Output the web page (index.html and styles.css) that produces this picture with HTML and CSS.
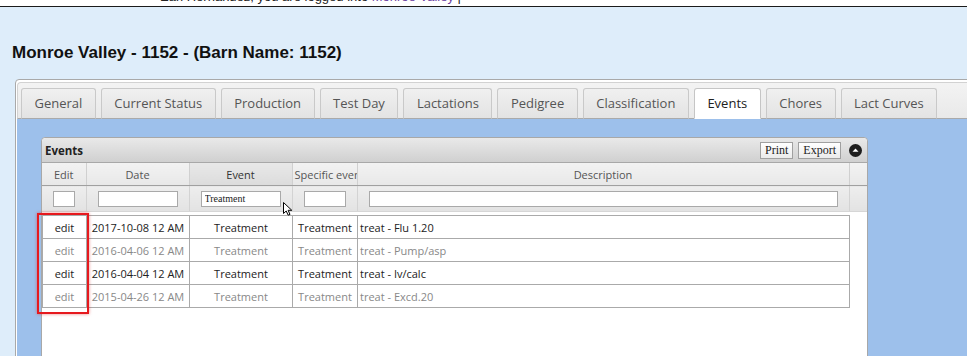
FILE: index.html
```html
<!DOCTYPE html>
<html>
<head>
<meta charset="utf-8">
<link rel="stylesheet" href="styles.css">
</head>
<body>
<div class="topbar">
  <div class="welcome">Earl Hernandez, you are logged into <span class="farm">Monroe Valley</span> |</div>
</div>
<h1 class="title">Monroe Valley - 1152 - (Barn Name: 1152)</h1>
<div class="tabs">
  <ul class="tabnav">
    <li class="tab">General</li>
    <li class="tab">Current Status</li>
    <li class="tab">Production</li>
    <li class="tab">Test Day</li>
    <li class="tab">Lactations</li>
    <li class="tab">Pedigree</li>
    <li class="tab">Classification</li>
    <li class="tab active">Events</li>
    <li class="tab">Chores</li>
    <li class="tab">Lact Curves</li>
  </ul>
  <div class="panel">
    <div class="grid">
      <div class="caption">
        <span class="caption-title">Events</span>
        <div class="caption-tools">
          <button class="btn">Print</button>
          <button class="btn">Export</button>
          <svg class="collapse" width="13" height="13" viewBox="0 0 13 13"><circle cx="6.5" cy="6.5" r="6.5" fill="#1d1d1d"/><path d="M3.5 7.8 L6.5 4.6 L9.5 7.8 Z" fill="#fff"/></svg>
        </div>
      </div>
      <div class="hdiv">
        <table class="htable">
          <colgroup><col class="c-edit"><col class="c-date"><col class="c-event"><col class="c-spec"><col class="c-desc"><col class="c-pad"></colgroup>
          <tr class="labels">
            <th>Edit</th><th>Date</th><th class="sorted">Event</th><th class="left">Specific event</th><th>Description</th><th class="pad"></th>
          </tr>
          <tr class="filters">
            <th><input class="fin" type="text"></th>
            <th><input class="fin" type="text"></th>
            <th><input class="fin" type="text" value="Treatment"></th>
            <th><input class="fin" type="text"></th>
            <th><input class="fin" type="text"></th>
            <th class="pad"></th>
          </tr>
        </table>
      </div>
      <div class="bdiv">
        <table class="btable">
          <colgroup><col class="c-edit"><col class="c-date"><col class="c-event"><col class="c-spec"><col class="c-desc"></colgroup>
          <tr class="row dark"><td>edit</td><td>2017-10-08 12 AM</td><td>Treatment</td><td>Treatment</td><td class="desc">treat - Flu 1.20</td></tr>
          <tr class="row light"><td>edit</td><td>2016-04-06 12 AM</td><td>Treatment</td><td>Treatment</td><td class="desc">treat - Pump/asp</td></tr>
          <tr class="row dark"><td>edit</td><td>2016-04-04 12 AM</td><td>Treatment</td><td>Treatment</td><td class="desc">treat - Iv/calc</td></tr>
          <tr class="row light"><td>edit</td><td>2015-04-26 12 AM</td><td>Treatment</td><td>Treatment</td><td class="desc">treat - Excd.20</td></tr>
        </table>
      </div>
    </div>
  </div>
</div>
<div class="highlight"></div>
<svg class="cursor" width="12" height="14" viewBox="0 0 12 14"><path d="M0.5 0.5 L0.5 11.5 L3.2 9 L5.2 13.2 L7 12.4 L5.1 8.3 L8.8 8.3 Z" fill="#fff" stroke="#000" stroke-width="1"/></svg>
</body>
</html>
```
FILE: styles.css
```css
html, body {
  height: 100%;
  overflow: hidden;
}
body {
  margin: 0;
  background: #deedfa;
  font-family: "Open Sans", "Liberation Sans", sans-serif;
  position: relative;
}
.topbar {
  height: 6px;
  background: #fff;
  border-bottom: 1px solid #1b1b1b;
  overflow: hidden;
}
.welcome {
  margin-top: -11px;
  padding-left: 160px;
  font-family: "Liberation Sans", sans-serif;
  font-size: 13px;
  line-height: 15px;
  color: #222;
  white-space: nowrap;
}
.farm { color: #6b3fa0; }
.title {
  margin: 36px 0 0 12px;
  font-family: "Liberation Sans", Arial, sans-serif;
  font-weight: bold;
  font-size: 17px;
  line-height: 20px;
  color: #111;
}
.tabs {
  margin: 16px -30px 0 15px;
  border: 1px solid #a9a9a9;
  border-radius: 4px 4px 0 0;
  padding: 2px 0 0 1px;
  background: #fff;
}
.tabnav {
  list-style: none;
  margin: 0;
  padding: 5px 0 0 3px;
  display: flex;
  gap: 5px;
  border-top: 1px solid #d2d2d2;
  border-left: 1px solid #d2d2d2;
  border-radius: 4px 0 0 0;
  border-bottom: 1px solid #aaa;
  background: linear-gradient(#f3f3f3, #e9e9e9);
}
.tab {
  box-sizing: border-box;
  height: 31px;
  margin-bottom: -1px;
  padding: 0 12.5px;
  border: 1px solid #c9c9c9;
  border-bottom-color: #aaa;
  border-radius: 3px 3px 0 0;
  background: linear-gradient(#f0f0f0, #e3e3e3);
  color: #555;
  font-size: 13px;
  line-height: 29px;
  white-space: nowrap;
}
.tab.active {
  background: #fff;
  border-color: #c5c5c5;
  border-bottom-color: #fff;
  color: #212121;
}
.panel {
  background: #9dc0eb;
  padding: 18px 0 0 24px;
  height: 260px;
}
.grid {
  width: 825px;
  border: 1px solid #a8a8a8;
  border-radius: 4px 4px 0 0;
  background: #fff;
  height: 240px;
  overflow: hidden;
}
.caption {
  height: 24px;
  display: flex;
  align-items: center;
  justify-content: space-between;
  padding: 0 5px 0 3px;
  background: linear-gradient(#e9e9e9, #d0d0d0);
  border-bottom: 1px solid #a8a8a8;
  border-radius: 4px 4px 0 0;
}
.caption-title {
  font-size: 11.5px;
  font-weight: bold;
  color: #222;
}
.caption-tools {
  display: flex;
  align-items: center;
  gap: 5px;
}
.btn {
  box-sizing: border-box;
  height: 17px;
  padding: 0 4px;
  border: 1px solid #a0a0a0;
  border-radius: 0;
  background: linear-gradient(#ffffff, #ebebeb);
  font-family: "Liberation Serif", "Times New Roman", serif;
  font-size: 12px;
  line-height: 14px;
  color: #222;
}
.collapse { margin-left: 3px; display: block; }
table {
  border-collapse: collapse;
  table-layout: fixed;
}
.htable { width: 825px; }
.c-edit { width: 44px; }
.c-date { width: 103px; }
.c-event { width: 103px; }
.c-spec { width: 65px; }
.c-desc { width: 492px; }
.c-pad { width: 18px; }
.labels th {
  height: 22px;
  padding: 0 2px;
  font-weight: normal;
  font-size: 11px;
  color: #555;
  background: linear-gradient(#f2f2f2, #e8e8e8);
  border-right: 1px solid #d0d0d0;
  border-bottom: 1px solid #a0a0a0;
  white-space: nowrap;
  overflow: hidden;
}
.labels th.sorted { background: linear-gradient(#e8e8e8, #dcdcdc); color: #333; }
.labels th.left { text-align: left; }
.labels th.pad { border-right: 0; }
.filters th {
  height: 25px;
  padding: 0;
  background: linear-gradient(#eeeeee, #e2e2e2);
  border-right: 1px solid #d3d3d3;
  border-bottom: 1px solid #d6d6d6;
}
.filters th.pad { border-right: 0; }
.fin {
  display: block;
  box-sizing: border-box;
  width: calc(100% - 22px);
  height: 16px;
  margin: 0 auto;
  padding: 0 3px;
  border: 1px solid #a9a9a9;
  background: #fff;
  font-family: "Liberation Serif", "Times New Roman", serif;
  font-size: 10px;
  color: #222;
}
.bdiv {
  padding-top: 3px;
}
.btable {
  width: 808px;
}
.row td {
  height: 22px;
  padding: 0 2px;
  border: 1px solid #aaa;
  font-size: 11px;
  text-align: center;
  white-space: nowrap;
  overflow: hidden;
}
.row td.desc { text-align: left; }
.row.dark td { color: #222; }
.row.light td { color: #888; }
.highlight {
  position: absolute;
  left: 37px;
  top: 213px;
  width: 48px;
  height: 97px;
  border: 2px solid #e6191e;
  box-shadow: 0 0 3px rgba(220, 30, 30, 0.55);
}
.cursor {
  position: absolute;
  left: 283px;
  top: 202px;
}
```
